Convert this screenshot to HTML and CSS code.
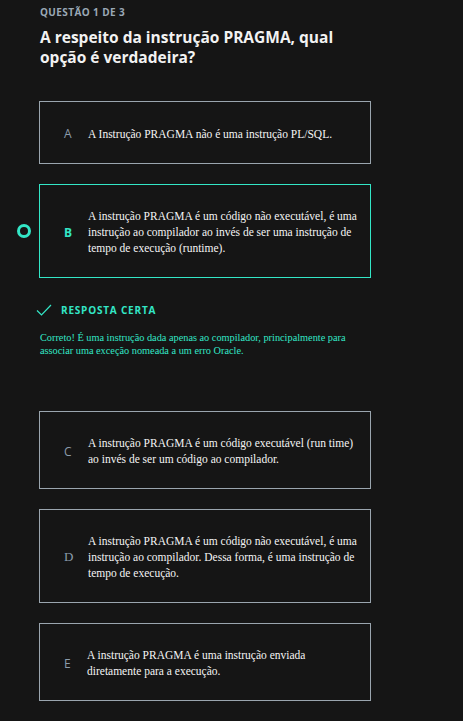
FILE: index.html
```html
<!DOCTYPE html>
<html lang="pt-BR">
<head>
<meta charset="utf-8">
<link rel="stylesheet" href="styles.css">
</head>
<body>
<main class="quiz">
  <header class="q-head">
    <p class="q-count">QUESTÃO 1 DE 3</p>
    <h1 class="q-title">A respeito da instrução PRAGMA, qual opção é verdadeira?</h1>
  </header>

  <div class="opt">
    <span class="mark"></span>
    <div class="box box-a">
      <span class="letter">A</span>
      <p class="txt">A Instrução PRAGMA não é uma instrução PL/SQL.</p>
    </div>
  </div>

  <div class="opt sel">
    <span class="mark"><span class="ring"></span></span>
    <div class="box">
      <span class="letter">B</span>
      <p class="txt">A instrução PRAGMA é um código não executável, é uma instrução ao compilador ao invés de ser uma instrução de tempo de execução (runtime).</p>
    </div>
  </div>

  <section class="feedback">
    <div class="fb-head">
      <svg class="check" width="16" height="12" viewBox="0 0 16 12"><path d="M1 6.5 L5.5 11 L15 1" fill="none" stroke="#33e6c6" stroke-width="1.2"/></svg>
      <span class="fb-title">RESPOSTA CERTA</span>
    </div>
    <p class="fb-text">Correto! É uma instrução dada apenas ao compilador, principalmente para associar uma exceção nomeada a um erro Oracle.</p>
  </section>

  <div class="opt">
    <span class="mark"></span>
    <div class="box">
      <span class="letter">C</span>
      <p class="txt">A instrução PRAGMA é um código executável (run time) ao invés de ser um código ao compilador.</p>
    </div>
  </div>

  <div class="opt">
    <span class="mark"></span>
    <div class="box">
      <span class="letter serif">D</span>
      <p class="txt">A instrução PRAGMA é um código não executável, é uma instrução ao compilador. Dessa forma, é uma instrução de tempo de execução.</p>
    </div>
  </div>

  <div class="opt">
    <span class="mark"></span>
    <div class="box">
      <span class="letter">E</span>
      <p class="txt txt-e">A instrução PRAGMA é uma instrução enviada diretamente para a execução.</p>
    </div>
  </div>
</main>
</body>
</html>
```

FILE: styles.css
```css
html, body {
  margin: 0;
  padding: 0;
  background: #151515;
}
body {
  width: 463px;
  height: 721px;
  overflow: hidden;
  font-family: "Open Sans", "Liberation Sans", sans-serif;
}
.quiz {
  display: flex;
  flex-direction: column;
}
.q-head {
  padding: 5px 0 0 40px;
}
.q-count {
  margin: 0;
  font-size: 10px;
  font-weight: 700;
  letter-spacing: 0.4px;
  color: #9aa8b5;
  line-height: 14px;
}
.q-title {
  margin: 8px 0 0;
  font-size: 15.5px;
  font-weight: 700;
  line-height: 20px;
  color: #f2f2f2;
  width: 320px;
}
.opt {
  display: grid;
  grid-template-columns: 39px 332px;
  align-items: center;
  margin-top: 20px;
}
.q-head + .opt {
  margin-top: 34px;
}
.mark {
  display: flex;
  justify-content: flex-end;
  padding-right: 8px;
}
.ring {
  width: 8px;
  height: 8px;
  border: 3px solid #33e6c6;
  border-radius: 50%;
}
.box {
  box-sizing: border-box;
  border: 1px solid #9aa5ae;
  display: flex;
  align-items: center;
  padding: 23px 8px 21px 24px;
  min-height: 63px;
}
.sel .box {
  border-color: #33e6c6;
}
.letter {
  width: 24px;
  flex: none;
  font-family: "Open Sans", "Liberation Sans", sans-serif;
  font-size: 12px;
  color: #8c9cab;
}
.letter.serif {
  font-family: "Liberation Serif", serif;
  font-size: 13px;
}
.sel .letter {
  color: #33e6c6;
  font-weight: 700;
}
.txt {
  margin: 0;
  font-family: "Liberation Serif", serif;
  font-size: 11.5px;
  line-height: 16px;
  color: #f4f4f4;
}
.txt-e {
  margin-left: -1px;
}
.feedback {
  padding: 25px 0 0 40px;
  margin-bottom: 34px;
}
.fb-head {
  display: flex;
  align-items: center;
  gap: 9px;
  margin-left: -4px;
}
.check {
  display: block;
}
.fb-title {
  font-size: 10px;
  font-weight: 700;
  letter-spacing: 0.8px;
  color: #33e6c6;
}
.fb-text {
  margin: 14px 0 0;
  width: 310px;
  font-family: "Liberation Serif", serif;
  font-size: 10.3px;
  line-height: 13px;
  color: #33e6c6;
}
```
